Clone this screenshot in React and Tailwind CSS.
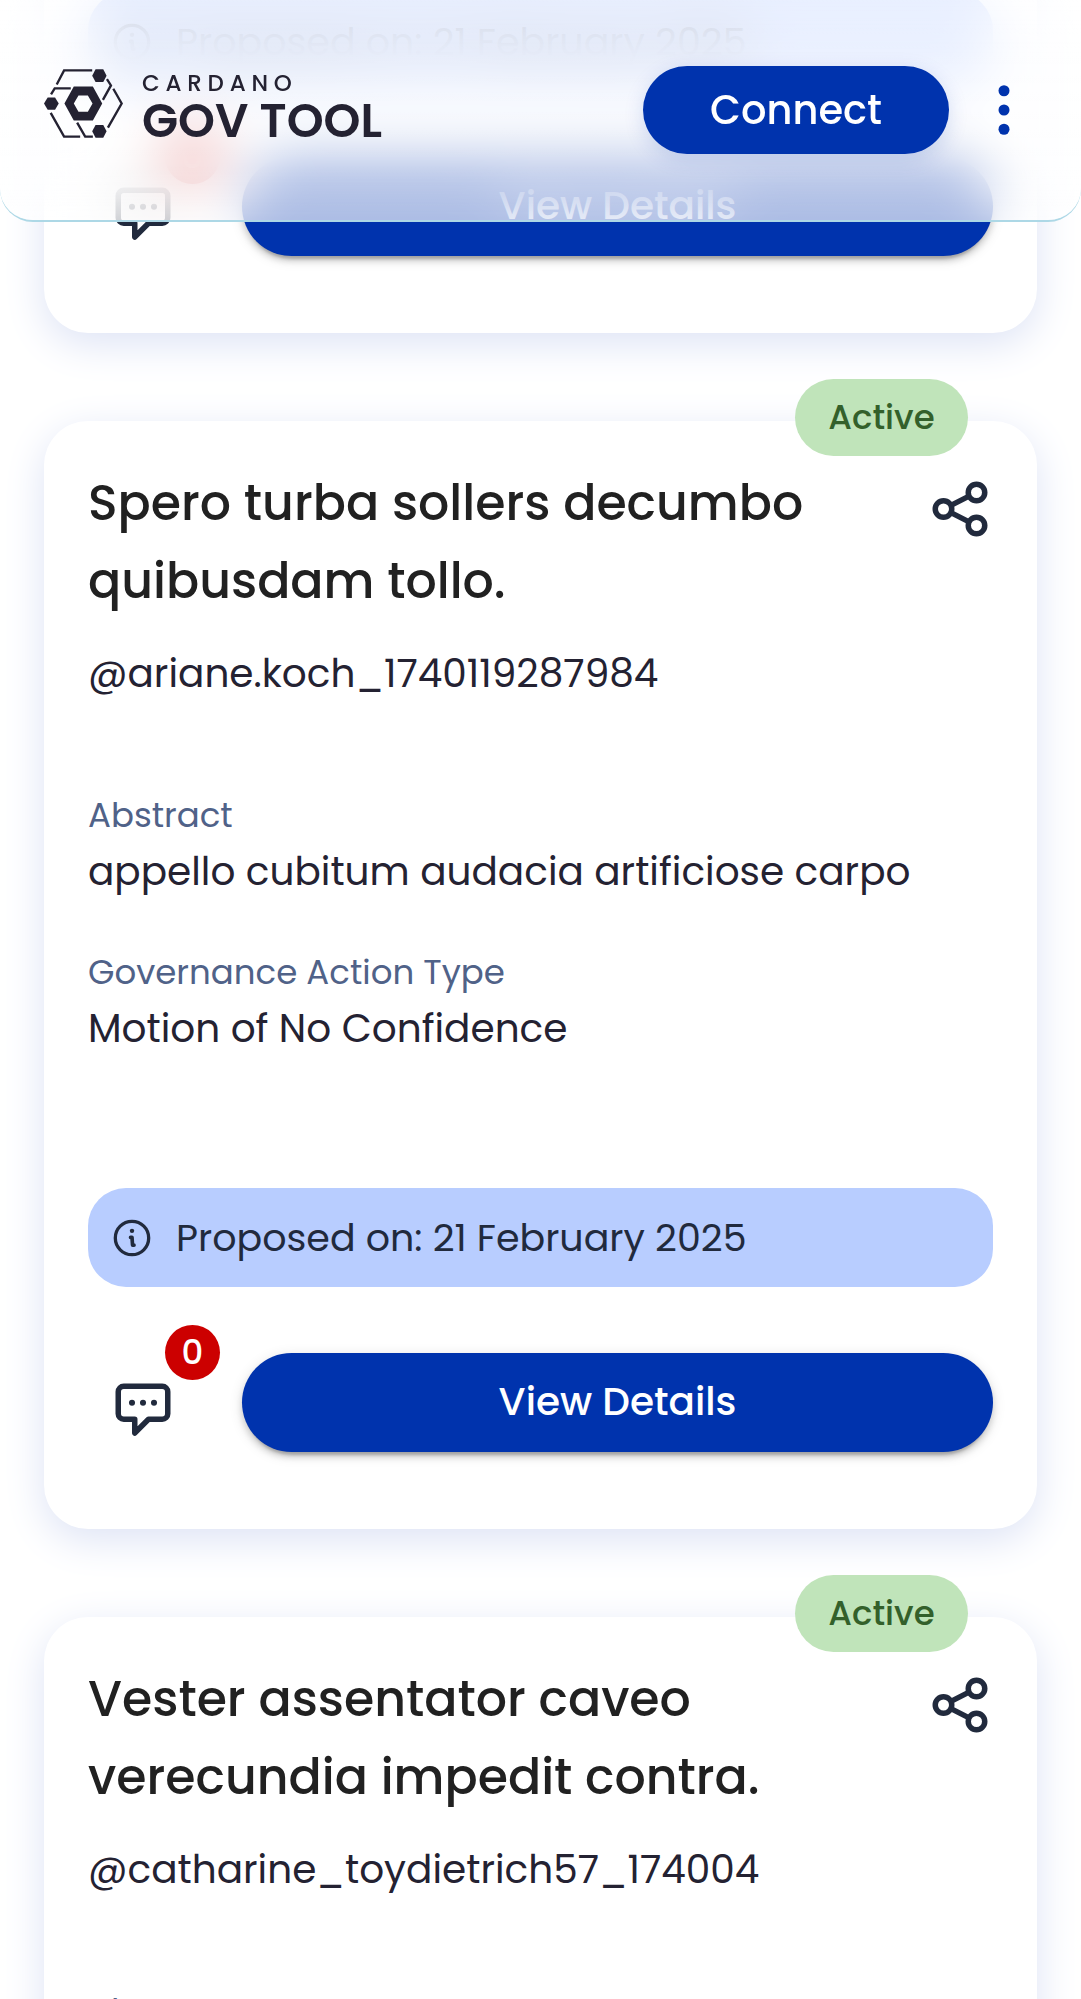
const INK = "#212a3d";

function LogoMark() {
  return (
    <svg viewBox="42 56 236 206" className="h-[69px] w-[79px] shrink-0" aria-hidden="true">
      <g fill="none" stroke="#242232" strokeWidth="7">
        <path d="M80 102 102 60H186" />
        <path d="M230 86 242 105 218 148" />
        <path d="M249 115 274 159 233 231" />
        <path d="M63 132 74 114H122" />
        <path d="M62 187 102 258H150" />
        <path d="M141 216 165 258H188" />
      </g>
      <g fill="#242232">
        <path d="M186 76 196 57H219L229 76 219 95H196Z" />
        <path d="M186 242 196 223H219L229 242 219 261H196Z" />
        <path d="M42 159 53 141H75L86 159 75 178H53Z" />
        <path
          fillRule="evenodd"
          d="M103 159 131 108H188L216 159 188 210H131ZM131 159 145 184H173L187 159 173 135H145Z"
        />
      </g>
    </svg>
  );
}

function KebabIcon() {
  return (
    <svg viewBox="0 0 24 24" className="size-[66px]" fill="#0033ad" aria-hidden="true">
      <circle cx="12" cy="5" r="2" />
      <circle cx="12" cy="12" r="2" />
      <circle cx="12" cy="19" r="2" />
    </svg>
  );
}

function ShareIcon() {
  return (
    <svg viewBox="0 0 24 24" className="size-[66px]" fill="none" stroke={INK} strokeWidth="2" aria-hidden="true">
      <circle cx="6" cy="12" r="3" />
      <circle cx="18" cy="6" r="3" />
      <circle cx="18" cy="18" r="3" />
      <path d="M8.7 10.7 15.3 7.3M8.7 13.3 15.3 16.7" />
    </svg>
  );
}

function InfoIcon() {
  return (
    <svg
      viewBox="0 0 24 24"
      className="size-11 shrink-0"
      fill="none"
      stroke={INK}
      strokeWidth="1.8"
      strokeLinecap="round"
      strokeLinejoin="round"
      aria-hidden="true"
    >
      <circle cx="12" cy="12" r="9.1" />
      <circle cx="12" cy="8.1" r="1.2" fill={INK} stroke="none" />
      <path d="M11.2 11.7H12L12.3 15.9H13.1" strokeWidth="2" />
    </svg>
  );
}

function CommentIcon() {
  return (
    <svg
      viewBox="0 0 24 24"
      className="size-[66px]"
      fill="none"
      stroke={INK}
      strokeWidth="2"
      strokeLinecap="round"
      strokeLinejoin="round"
      aria-hidden="true"
    >
      <path d="M5 3h14a2 2 0 0 1 2 2v8a2 2 0 0 1-2 2h-5l-5 5v-5H5a2 2 0 0 1-2-2V5a2 2 0 0 1 2-2z" />
      <g fill={INK} stroke="none">
        <circle cx="8" cy="9" r="1.1" />
        <circle cx="12" cy="9" r="1.1" />
        <circle cx="16" cy="9" r="1.1" />
      </g>
    </svg>
  );
}

function Header() {
  return (
    <header className="fixed inset-x-0 top-0 z-10 flex items-start justify-between rounded-b-[33px] border-b-2 border-[#add8e6] px-11 pt-[66px] pb-[66px]">
      <div className="absolute inset-0 -z-10 rounded-b-[33px] bg-[linear-gradient(rgba(255,255,255,0.75),rgba(255,255,255,0.7)_25%,rgba(255,255,255,0.68)_75%,rgba(255,255,255,0.82))] backdrop-blur-[28px] [mask-image:linear-gradient(rgba(0,0,0,0.92),#000_26%,#000_75%,rgba(0,0,0,0.93)_87%,rgba(0,0,0,0.83))]" />
      <a href="#" className="flex items-start gap-[19px] pt-[3px] text-[#242232]">
        <LogoMark />
        <span className="flex flex-col pt-0.5">
          <span className="text-[23px] leading-6 font-medium tracking-[0.25em]">CARDANO</span>
          <span className="text-[47px] leading-[52px] font-semibold whitespace-nowrap">GOV TOOL</span>
        </span>
      </a>
      <div className="flex items-center gap-[22px]">
        <button
          type="button"
          className="h-[88px] rounded-full bg-[#0033ad] px-[67px] text-[40px] font-medium text-white shadow-[0_5px_20px_rgba(0,51,173,0.15)]"
        >
          Connect
        </button>
        <button type="button" aria-label="Open menu">
          <KebabIcon />
        </button>
      </div>
    </header>
  );
}

function Field({ label, value }) {
  return (
    <div className="flex flex-col gap-2">
      <dt className="text-[34px] leading-10 text-[#506288]">{label}</dt>
      {value && <dd className="truncate text-[39px] leading-[58px] text-[#242232]">{value}</dd>}
    </div>
  );
}

function CardFooter({ proposed, comments }) {
  return (
    <footer>
      <p className="flex h-[99px] items-center gap-[22px] rounded-[38px] bg-[#b8cdff] px-[22px] text-[38px] text-[#212a3d]">
        <InfoIcon />
        <span className="truncate">Proposed on: {proposed}</span>
      </p>
      <div className="mt-[66px] flex items-start gap-11">
        <button
          type="button"
          aria-label="Comments"
          className="relative flex h-[91px] w-[110px] shrink-0 items-end justify-center"
        >
          <CommentIcon />
          <span className="absolute -top-7 -right-[22px] flex size-[55px] items-center justify-center rounded-full bg-[#cc0000] text-[34px] font-medium text-white">
            {comments}
          </span>
        </button>
        <button
          type="button"
          className="h-[99px] grow rounded-full bg-[#0033ad] text-[39px] font-medium text-white shadow-[0_8px_3px_-5px_rgba(0,0,0,0.2),0_5px_6px_rgba(0,0,0,0.14),0_3px_14px_rgba(0,0,0,0.12)]"
        >
          View Details
        </button>
      </div>
    </footer>
  );
}

function Card({ title, author, fields, proposed, comments }) {
  return (
    <article
      className={
        title
          ? "relative rounded-[44px] bg-white px-11 pt-[43px] pb-[77px] shadow-[0_11px_41px_#dde3f5]"
          : "relative rounded-[44px] bg-white px-11 pt-9 pb-[77px] shadow-[0_11px_41px_#dde3f5]"
      }
    >
      {title && (
        <>
          <span className="absolute -top-[42px] right-[69px] flex h-[77px] w-[173px] items-center justify-center rounded-full bg-[#c0e4ba] text-[34px] font-medium text-[#33602b]">
            Active
          </span>
          <div className="flex items-start justify-between">
            <h2 className="max-w-[760px] text-[49px] leading-[78px] font-medium text-[#212121]">{title}</h2>
            <button type="button" aria-label="Share" className="mt-3 shrink-0">
              <ShareIcon />
            </button>
          </div>
          <p className="mt-[25px] truncate text-[39px] leading-[58px] text-[#242232]">{author}</p>
          <dl className="mt-[92px] flex flex-col gap-[51px]">
            {fields.map((field) => (
              <Field key={field.label} {...field} />
            ))}
          </dl>
        </>
      )}
      {proposed && (
        <div className={title ? "mt-[130px]" : ""}>
          <CardFooter proposed={proposed} comments={comments} />
        </div>
      )}
    </article>
  );
}

const cards = [
  { id: 1, proposed: "21 February 2025", comments: 0 },
  {
    id: 2,
    title: "Spero turba sollers decumbo quibusdam tollo.",
    author: "@ariane.koch_1740119287984",
    fields: [
      { label: "Abstract", value: "appello cubitum audacia artificiose carpo" },
      { label: "Governance Action Type", value: "Motion of No Confidence" },
    ],
    proposed: "21 February 2025",
    comments: 0,
  },
  {
    id: 3,
    title: "Vester assentator caveo verecundia impedit contra.",
    author: "@catharine_toydietrich57_174004",
    fields: [{ label: "Abstract" }],
  },
];

export default function App() {
  return (
    <div className="h-screen overflow-hidden bg-white font-['Poppins','Inter',sans-serif]">
      <Header />
      <main className="-mt-11 flex flex-col gap-[88px] px-11">
        {cards.map((card) => (
          <Card key={card.id} {...card} />
        ))}
      </main>
    </div>
  );
}
